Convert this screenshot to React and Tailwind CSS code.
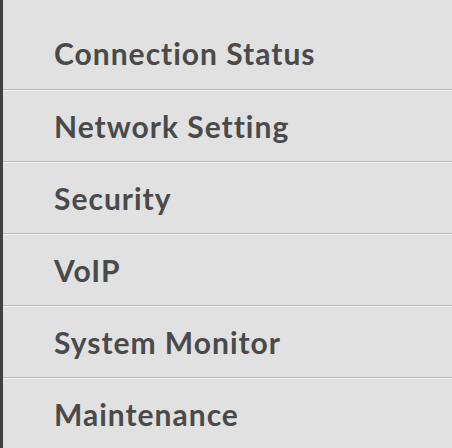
import React from "react";

const items = [
  "Connection Status",
  "Network Setting",
  "Security",
  "VoIP",
  "System Monitor",
  "Maintenance",
];

const App = () => {
  return (
    <div className="flex h-[448px] w-[452px] overflow-hidden bg-[#e1e1e1]">
      <div className="w-[3px] shrink-0 bg-[#3f3f3f]" />
      <ul className="flex-1 pt-[18px]">
        {items.map((label, i) => (
          <li
            key={label}
            className={`flex h-[72px] items-center pl-[51px] text-[30px] font-bold tracking-[1px] text-[#4a4a4a] ${
              i < items.length - 1 ? "border-b border-[#bcbcbc]" : ""
            } ${i > 0 ? "border-t border-t-[#f2f2f2]" : ""}`}
            style={{
              fontFamily: "Lato, 'Noto Sans', sans-serif",
              fontVariantLigatures: "none",
            }}
          >
            {label}
          </li>
        ))}
      </ul>
    </div>
  );
};

export default App;
